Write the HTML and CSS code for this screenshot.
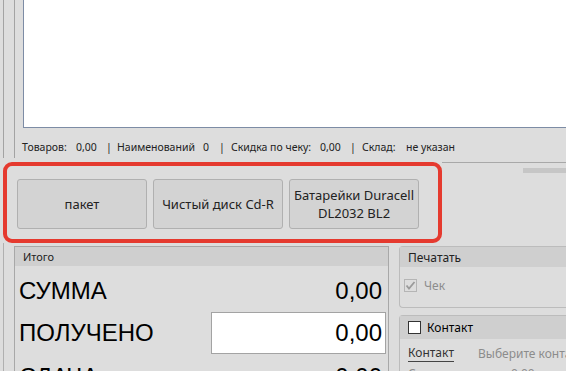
FILE: index.html
```html
<!DOCTYPE html>
<html lang="ru">
<head>
<meta charset="utf-8">
<link rel="stylesheet" href="styles.css">
</head>
<body>
<div class="top">
  <div class="rail"><div class="rail-line"></div></div>
  <div class="main">
    <div class="list"></div>
    <div class="status">
      <span class="s1">Товаров:</span><span class="s2">0,00</span><span class="s3">|</span><span class="s4">Наименований</span><span class="s5">0</span><span class="s6">|</span><span class="s7">Скидка по чеку:</span><span class="s8">0,00</span><span class="s9">|</span><span class="s10">Склад:</span><span>не указан</span>
    </div>
  </div>
</div>
<div class="mid">
  <div class="quick">
    <button class="qbtn">пакет</button>
    <button class="qbtn">Чистый диск Cd-R</button>
    <button class="qbtn">Батарейки Duracell<br>DL2032 BL2</button>
  </div>
  <div class="mid-right"><div class="grip"></div></div>
</div>
<div class="bottom">
  <div class="totals">
    <div class="phead small">Итого</div>
    <div class="tbody">
      <div class="trow first"><span class="big">СУММА</span><span class="big num">0,00</span></div>
      <div class="trow input-row"><span class="big">ПОЛУЧЕНО</span><div class="field big">0,00</div></div>
      <div class="trow last"><span class="big">СДАЧА</span><span class="big num">0,00</span></div>
    </div>
  </div>
  <div class="side">
    <div class="panel print">
      <div class="phead">Печатать</div>
      <div class="pbody">
        <span class="cb checked"><svg viewBox="0 0 13 13" width="13" height="13"><path d="M2.5 6.5 L5 9.5 L10.5 3" fill="none" stroke="#9a9a9a" stroke-width="1.8"/></svg></span>
        <span class="muted">Чек</span>
      </div>
    </div>
    <div class="panel contact">
      <div class="phead tall"><span class="cb white"></span><span class="dark">Контакт</span></div>
      <div class="cbody">
        <div class="crow"><span class="link">Контакт</span><span class="muted pick">Выберите контакт</span></div>
        <div class="crow"><span class="muted">Сумма покупок:</span><span class="muted">0,00</span></div>
      </div>
    </div>
  </div>
</div>
</body>
</html>
```
FILE: styles.css
```css
* { box-sizing: border-box; }
html, body { margin: 0; padding: 0; }
body {
  width: 566px;
  height: 371px;
  overflow: hidden;
  background: #dddddd;
  font-family: "Noto Sans", "Open Sans", sans-serif;
  font-size: 12px;
  color: #1e1e1e;
}
.top { display: flex; height: 162px; }
.rail {
  width: 20px;
  margin-left: 3px;
  border-left: 1px solid #a3a3a3;
  height: 158px;
  flex-shrink: 0;
}
.rail-line {
  margin-left: 10px;
  border-left: 1px solid #a3a3a3;
  height: 100%;
}
.main { flex: 1; display: flex; flex-direction: column; min-width: 0; }
.list {
  height: 128px;
  background: #ffffff;
  border-left: 1px solid #7d8ca5;
  border-bottom: 1px solid #7d8ca5;
}
.status {
  display: flex;
  align-items: center;
  margin-left: -1px;
  height: 34px;
  padding-top: 4px;
  white-space: nowrap;
  color: #222;
  font-size: 10.5px;
}
.s1 { width: 54px; }
.s2 { width: 30px; }
.s3 { width: 11px; }
.s4 { width: 86px; }
.s5 { width: 16px; }
.s6 { width: 12px; }
.s7 { width: 89px; }
.s8 { width: 30px; }
.s9 { width: 12px; }
.s10 { width: 44px; }

.mid { display: flex; height: 81px; }
.quick {
  width: 439px;
  flex-shrink: 0;
  margin-left: 3px;
  border: 4px solid #e53a2f;
  border-radius: 9px;
  padding: 13px 10px 10px;
  display: flex;
  gap: 6px;
}
.qbtn {
  width: 130px;
  height: 50px;
  background: #d3d3d3;
  border: 1px solid #b0b0b0;
  border-radius: 3px;
  font-family: "Noto Sans", "Open Sans", sans-serif;
  font-size: 13px;
  line-height: 18px;
  color: #222;
  padding: 0;
}
.mid-right {
  flex: 1;
  border-top: 1px solid #a8a8a8;
  display: flex;
  justify-content: flex-end;
}
.grip { width: 43px; height: 5px; margin-top: 5px; background: #c6c6c6; }

.bottom { display: flex; margin-left: 3px; border-left: 1px solid #b0b0b0; height: 128px; }
.totals {
  width: 375px;
  flex-shrink: 0;
  margin-left: 10px;
  margin-top: 3px;
  border: 1px solid #a8a8a8;
  border-bottom: none;
}
.phead {
  height: 20px;
  background: #cfcfcf;
  display: flex;
  align-items: center;
  padding-left: 8px;
  font-size: 12px;
  color: #222;
}
.phead.small { font-size: 11px; height: 19px; }
.tbody { padding: 0 2px 0 4px; }
.trow { display: flex; justify-content: space-between; align-items: center; }
.trow.first { padding-top: 11px; }
.trow.input-row { margin-top: 7px; }
.trow.last { margin-top: 9px; }
.big {
  font-family: "Liberation Sans", Arial, sans-serif;
  font-size: 24px;
  line-height: 28px;
  color: #000;
}
.num { padding-right: 4px; }
.field {
  width: 175px;
  height: 42px;
  background: #fff;
  border: 1px solid #a3a3a3;
  text-align: right;
  padding-right: 3px;
  padding-top: 6px;
}
.side { flex: 1; min-width: 0; overflow: hidden; margin-left: 10px; margin-top: 3px; }
.panel {
  border: 1px solid #bcbcbc;
  border-right: none;
  border-radius: 4px 0 0 4px;
}
.print { height: 62px; }
.pbody { display: flex; align-items: center; padding: 10px 0 0 4px; }
.cb {
  width: 13px; height: 13px;
  border: 1px solid #b5b5b5;
  display: inline-block;
  margin-right: 7px;
  flex-shrink: 0;
}
.cb svg { display: block; margin: -1px; }
.cb.white { background: #fff; border-color: #333; margin-right: 6px; }
.muted { color: #8c8c8c; }
.dark { color: #000; }
.contact { margin-top: 7px; height: 70px; }
.phead.tall { height: 23px; }
.cbody { padding: 4px 0 0 8px; }
.crow { display: flex; white-space: nowrap; height: 20px; align-items: center; }
.link { border-bottom: 1px solid #444; color: #333; line-height: 16px; margin-right: 24px; }
.crow .muted + .muted { margin-left: 10px; }
```
